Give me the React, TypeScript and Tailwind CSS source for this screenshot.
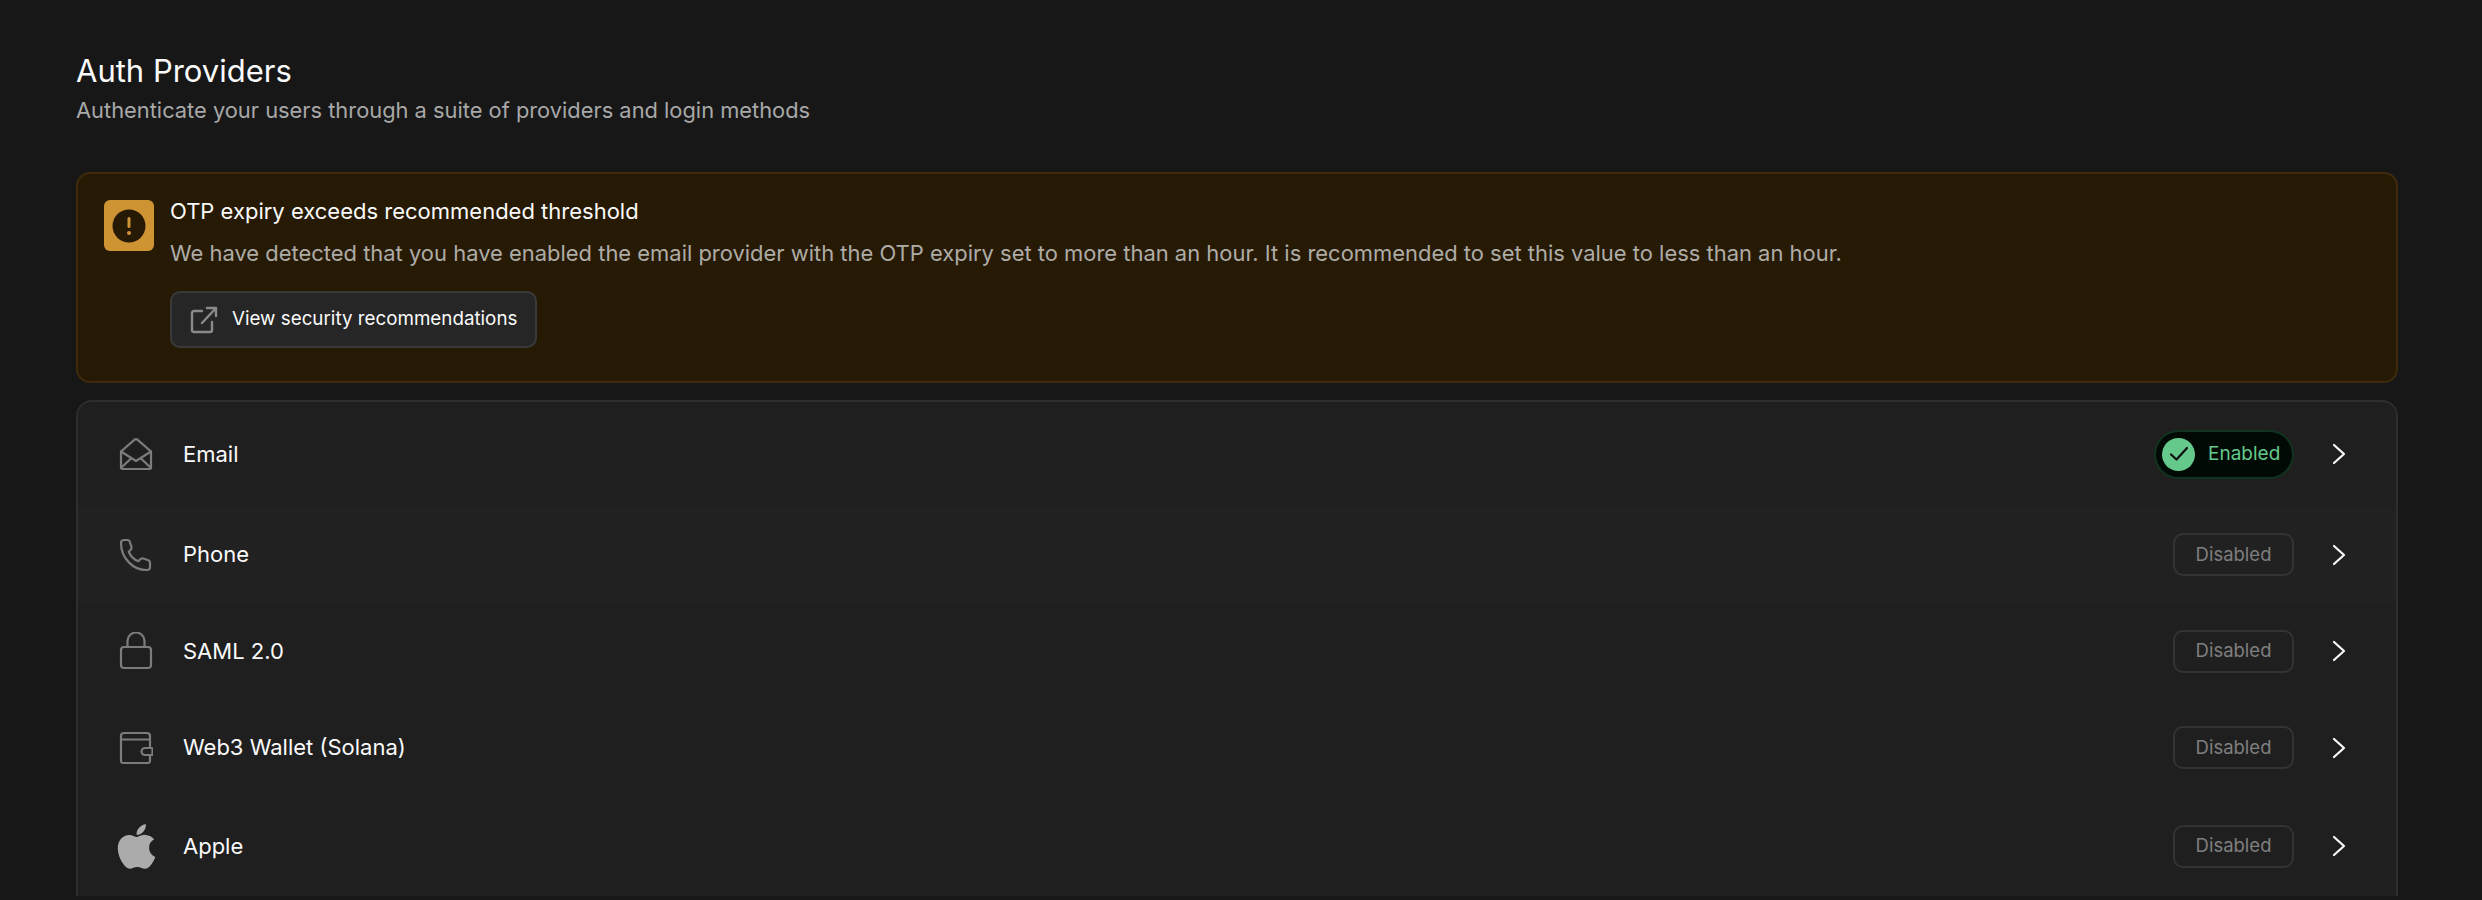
import React from "react";
import { FaApple } from "react-icons/fa";

const MailIcon = () => (
  <svg width="34" height="34" viewBox="0 0 34 34" fill="none" stroke="#7c7c7c" strokeWidth="2.200" strokeLinejoin="round" strokeLinecap="round">
    <path d="M2 14.500 15.600 2.600a2.200 2.200 0 0 1 2.800 0L32 14.500V30a2 2 0 0 1-2 2H4a2 2 0 0 1-2-2V14.500Z" />
    <path d="M2 14.500 17 24l15-9.500" />
    <path d="M2 31 12.500 21M32 31 21.500 21" />
  </svg>
);

const PhoneIcon = () => (
  <svg width="34" height="34" viewBox="0 0 34 34" fill="none" stroke="#7c7c7c" strokeWidth="2.200" strokeLinejoin="round" strokeLinecap="round">
    <path d="M5 2h3a3 3 0 0 1 3 2.300l1.500 4.500a3 3 0 0 1-1 3.200l-1.800 1.700a18 18 0 0 0 9.600 9.600l1.700-1.800a3 3 0 0 1 3.200-1l4.500 1.500a3 3 0 0 1 2.300 3V29a3 3 0 0 1-3 3h-1C14 32 2 20 2 5a3 3 0 0 1 3-3Z" />
  </svg>
);

const LockIcon = () => (
  <svg width="34" height="38" viewBox="0 0 34 38" fill="none" stroke="#7c7c7c" strokeWidth="2.200" strokeLinejoin="round" strokeLinecap="round">
    <rect x="2" y="15" width="30" height="21" rx="3" />
    <path d="M8.500 15V9a8.500 8.500 0 0 1 17 0v6" />
  </svg>
);

const WalletIcon = () => (
  <svg width="34" height="34" viewBox="0 0 34 34" fill="none" stroke="#7c7c7c" strokeWidth="2.200" strokeLinejoin="round" strokeLinecap="round">
    <path d="M31 17V5a3 3 0 0 0-3-3H5a3 3 0 0 0-3 3v25a2 2 0 0 0 2 2h25a2 2 0 0 0 2-2v-6" />
    <path d="M2 8.500h29" />
    <path d="M26 17h6.500a1 1 0 0 1 1 1v5a1 1 0 0 1-1 1H26a3.500 3.500 0 0 1 0-7Z" />
  </svg>
);

const ExternalIcon = () => (
  <svg width="28" height="28" viewBox="0 0 28 28" fill="none" stroke="#8a8a8a" strokeWidth="2.400" strokeLinejoin="round" strokeLinecap="round">
    <path d="M12 5H4a2 2 0 0 0-2 2v17a2 2 0 0 0 2 2h16a2 2 0 0 0 2-2v-8" />
    <path d="M12 17 26 2M17 2h9v8" />
  </svg>
);

const Chevron = () => (
  <svg width="14" height="22" viewBox="0 0 14 22" fill="none" stroke="#fafafa" strokeWidth="2.200" strokeLinecap="round" strokeLinejoin="round">
    <path d="M2 2l10 9-10 9" />
  </svg>
);

const EnabledBadge = () => (
  <div className="flex items-center h-[49px] w-[140px] rounded-full border-2 border-[#10341f] bg-[#020a06] pl-[6px] gap-[13px]">
    <span className="flex items-center justify-center w-[33px] h-[33px] rounded-full bg-[#65c98c]">
      <svg width="20" height="16" viewBox="0 0 20 16" fill="none" stroke="#101010" strokeWidth="2.200" strokeLinecap="round" strokeLinejoin="round">
        <path d="M2 8.500l5.500 5L18 2" />
      </svg>
    </span>
    <span className="text-[19px] text-[#65c98c]">Enabled</span>
  </div>
);

const DisabledBadge = () => (
  <div className="flex items-center justify-center h-[43px] w-[121px] rounded-[10px] border-2 border-[#333333] text-[18.500px] text-[#7f7f7f]">
    Disabled
  </div>
);

const providers = [
  { name: "Email", icon: <MailIcon />, enabled: true, rowClass: "h-[104px] bg-[#1f1f1f]" },
  { name: "Phone", icon: <PhoneIcon />, enabled: false, rowClass: "h-[97px] bg-[#212121]" },
  { name: "SAML 2.0", icon: <LockIcon />, enabled: false, rowClass: "h-[96px] bg-[#1f1f1f]" },
  { name: "Web3 Wallet (Solana)", icon: <WalletIcon />, enabled: false, rowClass: "h-[97px] bg-[#1f1f1f]" },
  { name: "Apple", icon: <FaApple size={51} color="#ababab" />, enabled: false, rowClass: "h-[100px] bg-[#1f1f1f]" },
];

export default function App() {
  return (
    <div className="h-[900px] overflow-hidden bg-[#171717] pl-[76px] pr-[84px] pt-[53px] font-['Inter','Liberation_Sans',sans-serif]">
      <h1 className="text-[31px] leading-[36px] text-[#fafafa]">Auth Providers</h1>
      <p className="mt-[6px] text-[21.850px] leading-[30px] text-[#a8a8a8]">
        Authenticate your users through a suite of providers and login methods
      </p>

      <div className="mt-[47px] flex gap-[16px] rounded-[14px] border-2 border-[#3f2a0c] bg-[#271a05] pl-[26px] pt-[26px] h-[211px]">
        <div className="flex items-center justify-center w-[50px] h-[51px] rounded-[6px] bg-[#ce9333]">
          <svg width="34" height="34" viewBox="0 0 34 34">
            <circle cx="17" cy="17" r="16.500" fill="#271a05" />
            <rect x="15.500" y="8" width="3" height="11" rx="1.500" fill="#ce9333" />
            <circle cx="17" cy="24" r="2" fill="#ce9333" />
          </svg>
        </div>
        <div>
          <div className="text-[22px] leading-[22px] text-[#fafafa]">OTP expiry exceeds recommended threshold</div>
          <div className="mt-[16px] text-[21.940px] leading-[30px] text-[#aeaca7]">
            We have detected that you have enabled the email provider with the OTP expiry set to more than an hour. It is recommended to set this value to less than an hour.
          </div>
          <button
            type="button"
            className="mt-[23px] flex items-center gap-[14px] h-[57px] w-[367px] rounded-[10px] border-2 border-[#393939] bg-[#262626] pl-[18px] text-[18.800px] text-[#fafafa]"
          >
            <ExternalIcon />
            View security recommendations
          </button>
        </div>
      </div>

      <div className="mt-[17px] rounded-t-[16px] border-2 border-b-0 border-[#2e2e2e] bg-[#1f1f1f] overflow-hidden">
        {providers.map((p) => (
          <div key={p.name} className={`flex items-center pl-[32px] pr-[50px] ${p.rowClass}`}>
            <div className="flex items-center justify-center w-[52px]">{p.icon}</div>
            <div className="ml-[21px] text-[22px] text-[#fafafa]">{p.name}</div>
            <div className="ml-auto flex items-center gap-[38px]">
              {p.enabled ? <EnabledBadge /> : <DisabledBadge />}
              <Chevron />
            </div>
          </div>
        ))}
      </div>
    </div>
  );
}
